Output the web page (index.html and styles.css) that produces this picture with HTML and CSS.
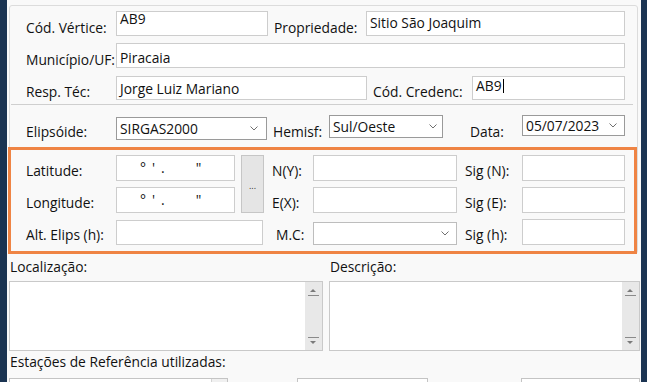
FILE: index.html
```html
<!DOCTYPE html>
<html lang="pt-BR">
<head>
    <meta charset="UTF-8">
    <title>Cadastro de Vértice</title>
    <link rel="stylesheet" href="styles.css">
</head>
<body>
<div class="window">
    <div class="group">
        <div class="row row-1">
            <span class="lbl w-lbl">Cód. Vértice:</span>
            <div class="edit w-vertice pt-0">AB9</div>
            <span class="lbl w-prop">Propriedade:</span>
            <div class="edit w-prop-edit pt-4">Sitio São Joaquim</div>
        </div>
        <div class="row row-2">
            <span class="lbl w-lbl">Município/UF:</span>
            <div class="edit w-mun pt-7">Piracaia</div>
        </div>
        <div class="row row-3">
            <span class="lbl w-lbl">Resp. Téc:</span>
            <div class="edit w-resp pt-5">Jorge Luiz Mariano</div>
            <span class="lbl w-cred">Cód. Credenc:</span>
            <div class="edit w-cred-edit pt-1">AB9<span class="caret"></span></div>
        </div>
        <div class="sep"></div>
        <div class="row row-4">
            <span class="lbl w-lbl">Elipsóide:</span>
            <div class="combo w-elip">
                <span>SIRGAS2000</span>
                <svg class="chev" width="8" height="5" viewBox="0 0 8 5"><path d="M0.5 0.5 L4 4 L7.5 0.5" fill="none" stroke="#707070"/></svg>
            </div>
            <span class="lbl w-hem">Hemisf:</span>
            <div class="combo w-hem-sel">
                <span>Sul/Oeste</span>
                <svg class="chev" width="8" height="5" viewBox="0 0 8 5"><path d="M0.5 0.5 L4 4 L7.5 0.5" fill="none" stroke="#707070"/></svg>
            </div>
            <span class="lbl w-data">Data:</span>
            <div class="combo w-date">
                <span>05/07/2023</span>
                <svg class="chev" width="8" height="5" viewBox="0 0 8 5"><path d="M0.5 0.5 L4 4 L7.5 0.5" fill="none" stroke="#707070"/></svg>
            </div>
        </div>

        <!-- coordenadas -->
        <div class="coords">
            <span class="lbl">Latitude:</span>
            <div class="edit mask"><span class="m-deg">°</span><span class="m-min">'</span><span class="m-dot">.</span><span class="m-sec">"</span></div>
            <div class="btn-dots">...</div>
            <span class="lbl">N(Y):</span>
            <div class="edit"></div>
            <span class="lbl sig">Sig (N):</span>
            <div class="edit"></div>

            <span class="lbl">Longitude:</span>
            <div class="edit mask"><span class="m-deg">°</span><span class="m-min">'</span><span class="m-dot">.</span><span class="m-sec">"</span></div>
            <span class="lbl">E(X):</span>
            <div class="edit"></div>
            <span class="lbl sig">Sig (E):</span>
            <div class="edit"></div>

            <span class="lbl">Alt. Elips (h):</span>
            <div class="edit alt"></div>
            <span class="lbl mc">M.C:</span>
            <div class="combo combo-mc">
                <span></span>
                <svg class="chev" width="8" height="5" viewBox="0 0 8 5"><path d="M0.5 0.5 L4 4 L7.5 0.5" fill="none" stroke="#707070"/></svg>
            </div>
            <span class="lbl sig">Sig (h):</span>
            <div class="edit"></div>
        </div>
    </div>

    <div class="notes">
        <div class="note">
            <span class="lbl">Localização:</span>
            <div class="memo">
                <div class="vscroll">
                    <div class="arrow-up"></div>
                    <div class="arrow-down"></div>
                </div>
            </div>
        </div>
        <div class="note">
            <span class="lbl">Descrição:</span>
            <div class="memo">
                <div class="vscroll">
                    <div class="arrow-up"></div>
                    <div class="arrow-down"></div>
                </div>
            </div>
        </div>
    </div>

    <div class="stations">
        <span class="lbl">Estações de Referência utilizadas:</span>
        <div class="station-row">
            <div class="box box-1"><div class="box-btn"></div></div>
            <div class="box box-2"></div>
            <div class="box box-3"></div>
        </div>
    </div>
</div>
</body>
</html>
```

FILE: styles.css
```css
* {
    margin: 0;
    padding: 0;
    box-sizing: border-box;
}

body {
    width: 647px;
    height: 382px;
    overflow: hidden;
    background: #1b3452;
    font: 13.8px "Open Sans", "Noto Sans", sans-serif;
    color: #111;
}

.window {
    margin-left: 7px;
    width: 634px;
    height: 382px;
    background: #f9f9f9;
    overflow: hidden;
}

/*caixa superior*/
.group {
    margin: 5px 3px 0 2px;
    border: 1px solid #dcdcdc;
    border-radius: 3px;
}

.row {
    display: flex;
    height: 25px;
    padding-left: 16px;
}

.row-1 { margin-top: 5px; }
.row-2 { margin-top: 7px; }
.row-3 { margin-top: 8px; height: 24px; }
.row-4 { margin-top: 10px; }

.lbl {
    align-self: flex-end;
    line-height: 14px;
    white-space: nowrap;
}

.row .lbl { margin-bottom: 1px; }

.w-lbl { width: 90px; }
.w-prop { width: 92px; margin-left: 6px; }
.w-cred { width: 99px; margin-left: 6px; }
.w-hem { width: 56px; margin-left: 6px; }
.w-data { width: 52px; margin-left: 27px; }

.edit {
    height: 25px;
    background: #fff;
    border: 1px solid #cdcdcd;
    padding: 0 3px;
    line-height: 11px;
    white-space: nowrap;
}

.pt-0 { padding-top: 1px; }
.pt-1 { padding-top: 2px; }
.pt-4 { padding-top: 5px; }
.pt-5 { padding-top: 6px; }
.pt-7 { padding-top: 8px; }

.w-vertice { width: 152px; }
.w-prop-edit { width: 259px; }
.w-mun { width: 509px; }
.w-resp { width: 251px; height: 24px; }
.w-cred-edit { width: 153px; height: 24px; }

.caret {
    display: inline-block;
    width: 1px;
    height: 14px;
    margin-left: 1px;
    background: #000;
    vertical-align: -2px;
}

.sep {
    height: 1px;
    margin: 4px 4px 0 1px;
    background: #cfcfcf;
}

.combo {
    display: flex;
    align-items: center;
    justify-content: space-between;
    background: #fff;
    border: 1px solid #9a9a9a;
    padding: 0 7px 0 3px;
    line-height: 14px;
}

.w-elip { width: 151px; height: 23px; margin-top: 2px; padding-right: 8px; }
.w-hem-sel { width: 114px; height: 23px; padding-right: 5px; }
.w-date { width: 103px; height: 21px; }

.chev {
    display: block;
    flex: none;
}

/*quadro laranja das coordenadas*/
.coords {
    display: grid;
    grid-template-columns: 90px 119px 37px 41px 144px 65px 103px;
    grid-template-rows: 26px 26px 26px;
    row-gap: 6px;
    margin: 7px 0 -1px -2px;
    width: 629px;
    padding: 5px 0 6px 15px;
    border: 3px solid #ef8444;
}

.coords .lbl { margin-bottom: 3px; }
.coords .edit { height: 26px; }
.coords .sig { padding-left: 8px; }
.coords .mc { padding-left: 4px; }

.mask {
    display: flex;
    padding-top: 6px;
    font-size: 14px;
}

.m-deg { margin-left: 20px; }
.m-min { margin-left: 6px; }
.m-dot { margin-left: 6px; }
.m-sec { margin-left: 31px; }

.btn-dots {
    grid-column: 3;
    grid-row: 1 / span 2;
    margin-left: 6px;
    width: 23px;
    background: #e5e5e5;
    border: 1px solid #c6c6c6;
    font-size: 9px;
    line-height: 9px;
    text-align: center;
    padding-top: 25px;
    color: #333;
}

.alt {
    grid-column: 2 / span 2;
    width: 147px;
    margin-top: 1px;
}

.coords .alt { height: 25px; }

.combo-mc {
    height: 23px;
    margin-top: 3px;
    border-color: #bdbdbd;
}

/*memos*/
.notes {
    display: grid;
    grid-template-columns: 314px 311px;
    column-gap: 6px;
    margin: 6px 0 0 2px;
}

.note .lbl {
    display: block;
    height: 14px;
    padding-left: 1px;
}

.memo {
    display: flex;
    justify-content: flex-end;
    margin-top: 7px;
    height: 70px;
    background: #fff;
    border: 1px solid #c9c9c9;
}

.vscroll {
    display: flex;
    flex-direction: column;
    justify-content: space-between;
    width: 17px;
    background: #e8e8e8;
    padding: 7px 3px 6px 3px;
}

.arrow-up,
.arrow-down {
    height: 7px;
    position: relative;
}

.arrow-up {
    border-bottom: 1px solid #8a8a8a;
}

.arrow-down {
    border-top: 1px solid #8a8a8a;
}

.arrow-up:before,
.arrow-down:before {
    content: '';
    position: absolute;
    left: 2px;
    border-left: 3px solid transparent;
    border-right: 3px solid transparent;
}

.arrow-up:before {
    top: 0;
    border-bottom: 3px solid #7a7a7a;
}

.arrow-down:before {
    bottom: 0;
    border-top: 3px solid #7a7a7a;
}

/*estacoes*/
.stations {
    margin: 4px 0 0 3px;
}

.stations .lbl {
    display: block;
    height: 14px;
}

.station-row {
    display: flex;
    margin-top: 9px;
    margin-left: -1px;
}

.box {
    height: 20px;
    background: #fff;
    border: 1px solid #c4c4c4;
}

.box-1 {
    display: flex;
    justify-content: flex-end;
    width: 219px;
}

.box-btn {
    width: 16px;
    border-left: 1px solid #d4d4d4;
    background: #f0f0f0;
}

.box-2 { width: 131px; margin-left: 69px; }
.box-3 { width: 119px; margin-left: 93px; }
```
